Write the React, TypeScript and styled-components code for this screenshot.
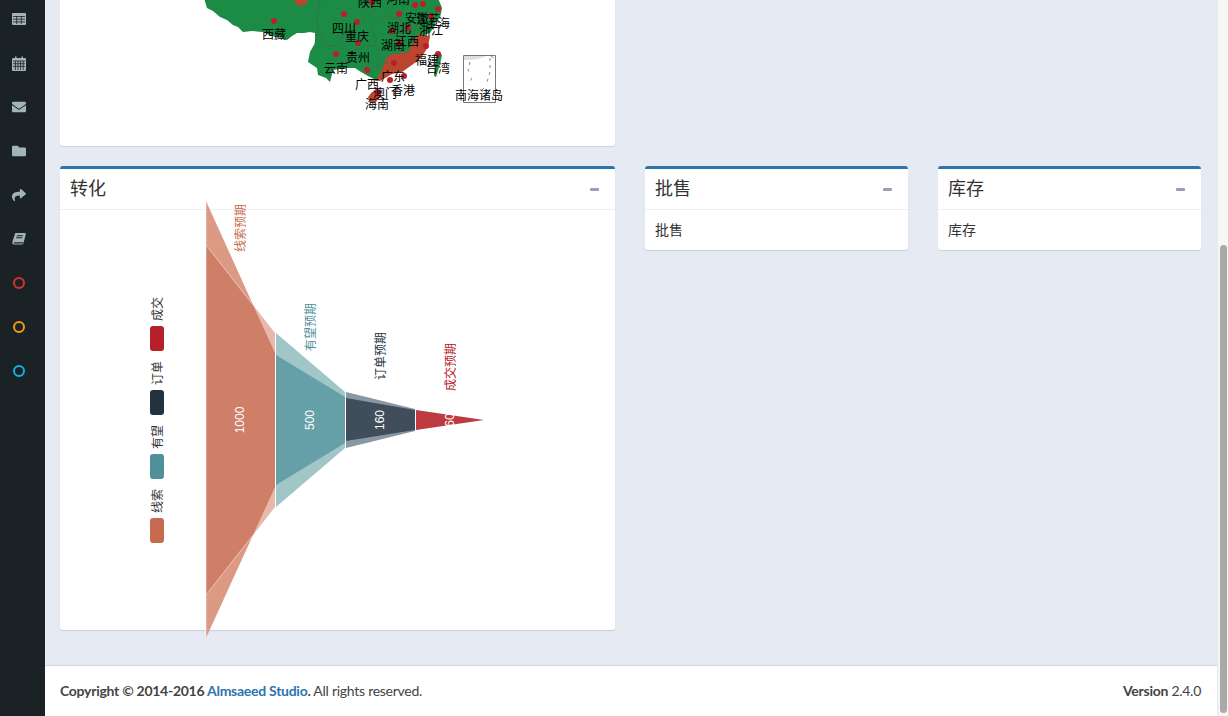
import React from "react";
import styled, { createGlobalStyle } from "styled-components";
import { FaEnvelope, FaFolder, FaShare } from "react-icons/fa";

const GlobalStyle = createGlobalStyle`
  html, body {
    margin: 0;
    height: 100%;
    overflow: hidden;
  }

  body {
    background: #e6eaf2;
    color: #333;
    font-family: "Lato", "Noto Sans CJK SC", sans-serif;
    font-size: 14px;
  }
`;

const Page = styled.div`
  display: flex;
  height: 716px;
  overflow: hidden;
`;

const Sidebar = styled.nav`
  background: #1a2226;
  display: flex;
  flex: 0 0 45px;
  flex-direction: column;
`;

const SideList = styled.div`
  display: flex;
  flex-direction: column;
  margin-top: -3px;
`;

const SideItem = styled.a`
  align-items: center;
  color: #a3b3ba;
  display: flex;
  height: 44px;
  justify-content: center;
  padding-right: 7px;
`;

const Ring = styled.span<{ $color: string }>`
  border: 2px solid ${(p) => p.$color};
  border-radius: 50%;
  box-sizing: border-box;
  display: block;
  height: 12px;
  width: 12px;
`;

const Main = styled.div`
  display: flex;
  flex: 1;
  flex-direction: column;
  min-width: 0;
`;

const Content = styled.main`
  display: grid;
  flex: 1;
  grid-template-columns: 555px 263px 263px;
  grid-template-rows: 146px auto;
  column-gap: 30px;
  row-gap: 20px;
  align-content: start;
  align-items: start;
  padding: 0 16px 0 15px;
`;

const MapCard = styled.section`
  background: #fff;
  border-radius: 0 0 3px 3px;
  box-shadow: 0 1px 1px rgba(0, 0, 0, 0.1);
  grid-column: 1 / span 3;
  height: 146px;
  width: 555px;
`;

const Card = styled.section`
  background: #fff;
  border-radius: 3px;
  border-top: 3px solid #2d74ad;
  box-shadow: 0 1px 1px rgba(0, 0, 0, 0.12);
`;

const CardHeader = styled.header`
  align-items: center;
  border-bottom: 1px solid #f0f0f0;
  box-sizing: content-box;
  display: flex;
  height: 36px;
  justify-content: space-between;
  padding: 0 16px 4px 10px;
`;

const CardTitle = styled.h3`
  color: #333;
  font-family: "Noto Sans CJK SC", sans-serif;
  font-size: 18px;
  font-weight: 400;
  line-height: 36px;
  margin: 0;
`;

const Collapse = styled.span`
  background: #97a0b3;
  border-radius: 1px;
  display: block;
  height: 3px;
  margin-top: 4px;
  width: 9px;
`;

const CardBody = styled.div`
  font-family: "Noto Sans CJK SC", sans-serif;
  font-size: 14px;
  line-height: 20px;
  padding: 9px 10px 11px;
`;

const ChartBody = styled.div`
  height: 420px;
`;

const Drawing = styled.svg`
  display: block;
  overflow: visible;
`;

const MapLabel = styled.text`
  fill: #000;
  font-family: "Noto Sans CJK SC", sans-serif;
  font-size: 12px;
  text-anchor: middle;
`;

const ChartLabel = styled.text<{ $color: string }>`
  dominant-baseline: central;
  fill: ${(p) => p.$color};
  font-family: "Noto Sans CJK SC", sans-serif;
  font-size: 12px;
  text-anchor: middle;
`;

const ValueLabel = styled.text`
  dominant-baseline: central;
  fill: #fff;
  font-family: "Liberation Sans", sans-serif;
  font-size: 12px;
  text-anchor: middle;
`;

const Footer = styled.footer`
  align-items: center;
  background: #fff;
  border-top: 1px solid #d2d6de;
  box-sizing: border-box;
  color: #444;
  display: flex;
  height: 51px;
  justify-content: space-between;
  letter-spacing: -0.27px;
  padding: 0 16px 2px 15px;
`;

const FooterLink = styled.a`
  color: #2d74ad;
`;

const ScrollTrack = styled.div`
  background: #f6f6f6;
  border-left: 1px solid #e8e8e8;
  box-sizing: border-box;
  flex: 0 0 11px;
  padding: 245px 1px 3px 2px;
`;

const ScrollThumb = styled.div`
  background: #a9a9a9;
  border-radius: 4px;
  height: 100%;
`;

const TableIcon = () => (
  <svg width="14" height="12" viewBox="0 0 14 12">
    <rect width="14" height="12" rx="1" fill="currentColor" />
    <path
      stroke="#1a2226"
      strokeWidth="0.8"
      d="M1 3.500h12M1 6.200h12M1 8.900h12M4.700 3v8M9.300 3v8"
    />
  </svg>
);

const CalendarIcon = () => (
  <svg width="14" height="15" viewBox="0 0 14 15">
    <path
      fill="currentColor"
      d="M1 2h2V0.500h1.500V2h5V0.500H11V2h2a1 1 0 0 1 1 1v11a1 1 0 0 1-1 1H1a1 1 0 0 1-1-1V3a1 1 0 0 1 1-1z"
    />
    <path
      stroke="#1a2226"
      strokeWidth="0.8"
      d="M1 5h12M1 7.700h12M1 10.400h12M3.400 5v9M6 5v9M8.600 5v9M11.200 5v9"
    />
  </svg>
);

const BookIcon = () => (
  <svg width="14" height="14" viewBox="0 0 14 14">
    <path
      fill="currentColor"
      d="M3.600 1h9.200c.8 0 1.200.6 1 1.300l-2.300 8.600c-.3 1-1 1.600-2 1.600H2.200c-1.300 0-2-1-1.800-2.300L.5 9.500 3 1.700C3.100 1.300 3.300 1 3.600 1z"
    />
    <path
      fill="#1a2226"
      d="M5 3.200h6l-.3 1H4.700zM4.400 5.200h6l-.3 1H4.100zM2 10.300h9.400l-.4 1.100H2.600c-.8 0-1-.7-.6-1.100z"
    />
  </svg>
);

const province = (d: string) => (
  <path key={d} d={d} fill="none" stroke="#3d6b4d" strokeWidth="0.7" />
);

const dots: [number, number][] = [
  [274, 21], [344, 14], [357, 22], [358, 43], [336, 54], [367, 70], [399, 14], [415, 5],
  [423, 4], [438, 9], [431, 16], [408, 28], [392, 31], [399, 43], [426, 46], [394, 63],
  [438, 54], [390, 80], [404, 76], [377, 92], [372, 2],
];

const mapLabels: [string, number, number][] = [
  ["陕西", 370, 7], ["河南", 398, 4], ["安徽", 417, 23], ["江苏", 428, 24], ["上海", 438, 28],
  ["四川", 344, 33], ["重庆", 357, 41], ["湖北", 399, 33], ["浙江", 431, 35], ["湖南", 393, 50],
  ["江西", 407, 46], ["西藏", 274, 39], ["贵州", 358, 62], ["云南", 336, 73], ["福建", 427, 65],
  ["台湾", 438, 73], ["广东", 393, 81], ["广西", 367, 89], ["香港", 403, 95], ["澳门", 385, 98],
  ["海南", 377, 109], ["南海诸岛", 479, 100],
];

const ChinaMap = () => (
  <Drawing width="555" height="146" viewBox="60 0 555 146">
    <defs>
      <clipPath id="map-edge">
        <rect x="60" y="0" width="555" height="146" />
      </clipPath>
    </defs>
    <g clipPath="url(#map-edge)">
      <path
        fill="#1c8b45"
        d="M204 -2L207 8L213 11L220 17L227 20L233 25L238 27L243 32L252 31L263 32L272 36L280 37L287 40L292 36L297 33L304 33L310 32L315 33L315 43L310 52L308 62L317 68L318 75L326 78L330 82L333 70L340 69L347 68L355 68L361 72L368 76L376 80L388 72L398 62L408 56L420 36L430 33L434 27L436 21L440 18L442 8L438 -2Z"
      />
      <path fill="#1c8b45" d="M435 63L439 52L442 55L440 64L436 77L434 76Z" />
      <path
        fill="#bb452e"
        d="M375 81L381 72L386 58L392 54L408 52L413 43L418 34L430 36L428 47L421 58L412 65L402 72L392 74L380 81Z"
      />
      <path fill="#bb452e" d="M368 97L372 92L380 90L381 95L376 102L370 102Z" />
      <path fill="#bb452e" d="M293 -2L296 4L302 6L306 4L309 -2Z" />
      {[
        "M315 43L318 28L317 16L320 0",
        "M318 30L326 46L336 46L344 32L352 31",
        "M344 32L342 44L349 52L345 68",
        "M349 52L367 46L376 46L380 56L376 70",
        "M352 31L362 24L368 14L376 10L370 -2",
        "M376 46L372 24L386 16L398 18L404 24L414 32",
        "M404 24L400 36L404 50L398 54",
        "M414 32L420 20L416 8",
        "M398 18L404 10L400 -2",
        "M420 36L412 38L408 50",
        "M368 73L375 66L390 62",
      ].map(province)}
      {dots.map(([x, y]) => (
        <circle key={`${x}-${y}`} cx={x} cy={y} r="3" fill="#b91f2b" />
      ))}
      <path fill="#fff" stroke="#777" d="M463.500 55.500H495.500V102.500H463.500Z" />
      <path fill="#dde0dc" d="M464 56H486C482 59 472 60 464 60Z" />
      <path
        fill="none"
        stroke="#666"
        strokeWidth="0.8"
        strokeDasharray="3 4"
        d="M470 62L468 70L471 75M490 58L490 72L487 82M472 78L468 84M484 88L480 92M491 56L494 58"
      />
      {mapLabels.map(([label, x, y]) => (
        <MapLabel key={label} x={x} y={y}>
          {label}
        </MapLabel>
      ))}
    </g>
  </Drawing>
);

const legend = [
  { name: "成交", color: "#b5202a", y: 326 },
  { name: "订单", color: "#22333f", y: 390 },
  { name: "有望", color: "#4f909a", y: 454 },
  { name: "线索", color: "#c66b50", y: 518 },
];

const turned = (x: number, y: number) => `rotate(-90 ${x} ${y})`;

const Funnel = () => (
  <ChartBody>
    <Drawing width="555" height="420" viewBox="60 210 555 420">
      {legend.map((item) => (
        <g key={item.name}>
          <rect x="150" y={item.y} width="14" height="25" rx="3" fill={item.color} />
          <ChartLabel x="156" y={item.y - 17} $color="#333" transform={turned(156, item.y - 17)}>
            {item.name}
          </ChartLabel>
        </g>
      ))}

      <polygon points="206,201 275,353 275,487 206,638" fill="#dc9a84" />
      <polygon points="206,245 275,333 275,507 206,595" fill="#e6b9aa" />
      <polygon points="206,245 253,305 275,353 275,487 253,535 206,595" fill="#cf7e68" />
      <path d="M206 245L253 305M206 595L253 535" stroke="#fff" strokeOpacity="0.45" />
      <path d="M206 201V638" stroke="#fff" strokeOpacity="0.5" />

      <polygon points="276,333 345,392 345,448 276,507" fill="#a0c6c8" />
      <polygon points="276,355 345,397 345,443 276,485" fill="#659fa7" />
      <path d="M275.500 333V507" stroke="#fff" strokeOpacity="0.7" />

      <polygon points="346,392 415,409 415,431 346,448" fill="#8a98a3" />
      <polygon points="346,398 415,410 415,430 346,441" fill="#3f4e5a" />
      <path d="M345.500 392V448" stroke="#fff" strokeOpacity="0.7" />

      <polygon points="416,410 484,420 416,430" fill="#bd3a40" />
      <path d="M415.500 409V431" stroke="#fff" strokeOpacity="0.7" />

      <ValueLabel x="240" y="420" transform={turned(240, 420)}>1000</ValueLabel>
      <ValueLabel x="310" y="420" transform={turned(310, 420)}>500</ValueLabel>
      <ValueLabel x="380" y="420" transform={turned(380, 420)}>160</ValueLabel>
      <ValueLabel x="450" y="420" transform={turned(450, 420)}>60</ValueLabel>

      <ChartLabel x="239" y="228" $color="#c66b50" transform={turned(239, 228)}>线索预期</ChartLabel>
      <ChartLabel x="309" y="327" $color="#4f909a" transform={turned(309, 327)}>有望预期</ChartLabel>
      <ChartLabel x="379" y="356" $color="#22333f" transform={turned(379, 356)}>订单预期</ChartLabel>
      <ChartLabel x="449" y="367" $color="#b5202a" transform={turned(449, 367)}>成交预期</ChartLabel>
    </Drawing>
  </ChartBody>
);

const SmallCard = ({ title }: { title: string }) => (
  <Card>
    <CardHeader>
      <CardTitle>{title}</CardTitle>
      <Collapse />
    </CardHeader>
    <CardBody>{title}</CardBody>
  </Card>
);

const App = () => (
  <Page>
    <GlobalStyle />
    <Sidebar>
      <SideList>
        <SideItem><TableIcon /></SideItem>
        <SideItem><CalendarIcon /></SideItem>
        <SideItem><FaEnvelope size={14} /></SideItem>
        <SideItem><FaFolder size={14} /></SideItem>
        <SideItem><FaShare size={14} /></SideItem>
        <SideItem><BookIcon /></SideItem>
        <SideItem><Ring $color="#d0342c" /></SideItem>
        <SideItem><Ring $color="#f39c12" /></SideItem>
        <SideItem><Ring $color="#12b0e6" /></SideItem>
      </SideList>
    </Sidebar>
    <Main>
      <Content>
        <MapCard>
          <ChinaMap />
        </MapCard>
        <Card>
          <CardHeader>
            <CardTitle>转化</CardTitle>
            <Collapse />
          </CardHeader>
          <Funnel />
        </Card>
        <SmallCard title="批售" />
        <SmallCard title="库存" />
      </Content>
      <Footer>
        <span>
          <strong>
            Copyright © 2014-2016 <FooterLink>Almsaeed Studio</FooterLink>.
          </strong>{" "}
          All rights reserved.
        </span>
        <span>
          <strong>Version</strong> 2.4.0
        </span>
      </Footer>
    </Main>
    <ScrollTrack>
      <ScrollThumb />
    </ScrollTrack>
  </Page>
);

export default App;
